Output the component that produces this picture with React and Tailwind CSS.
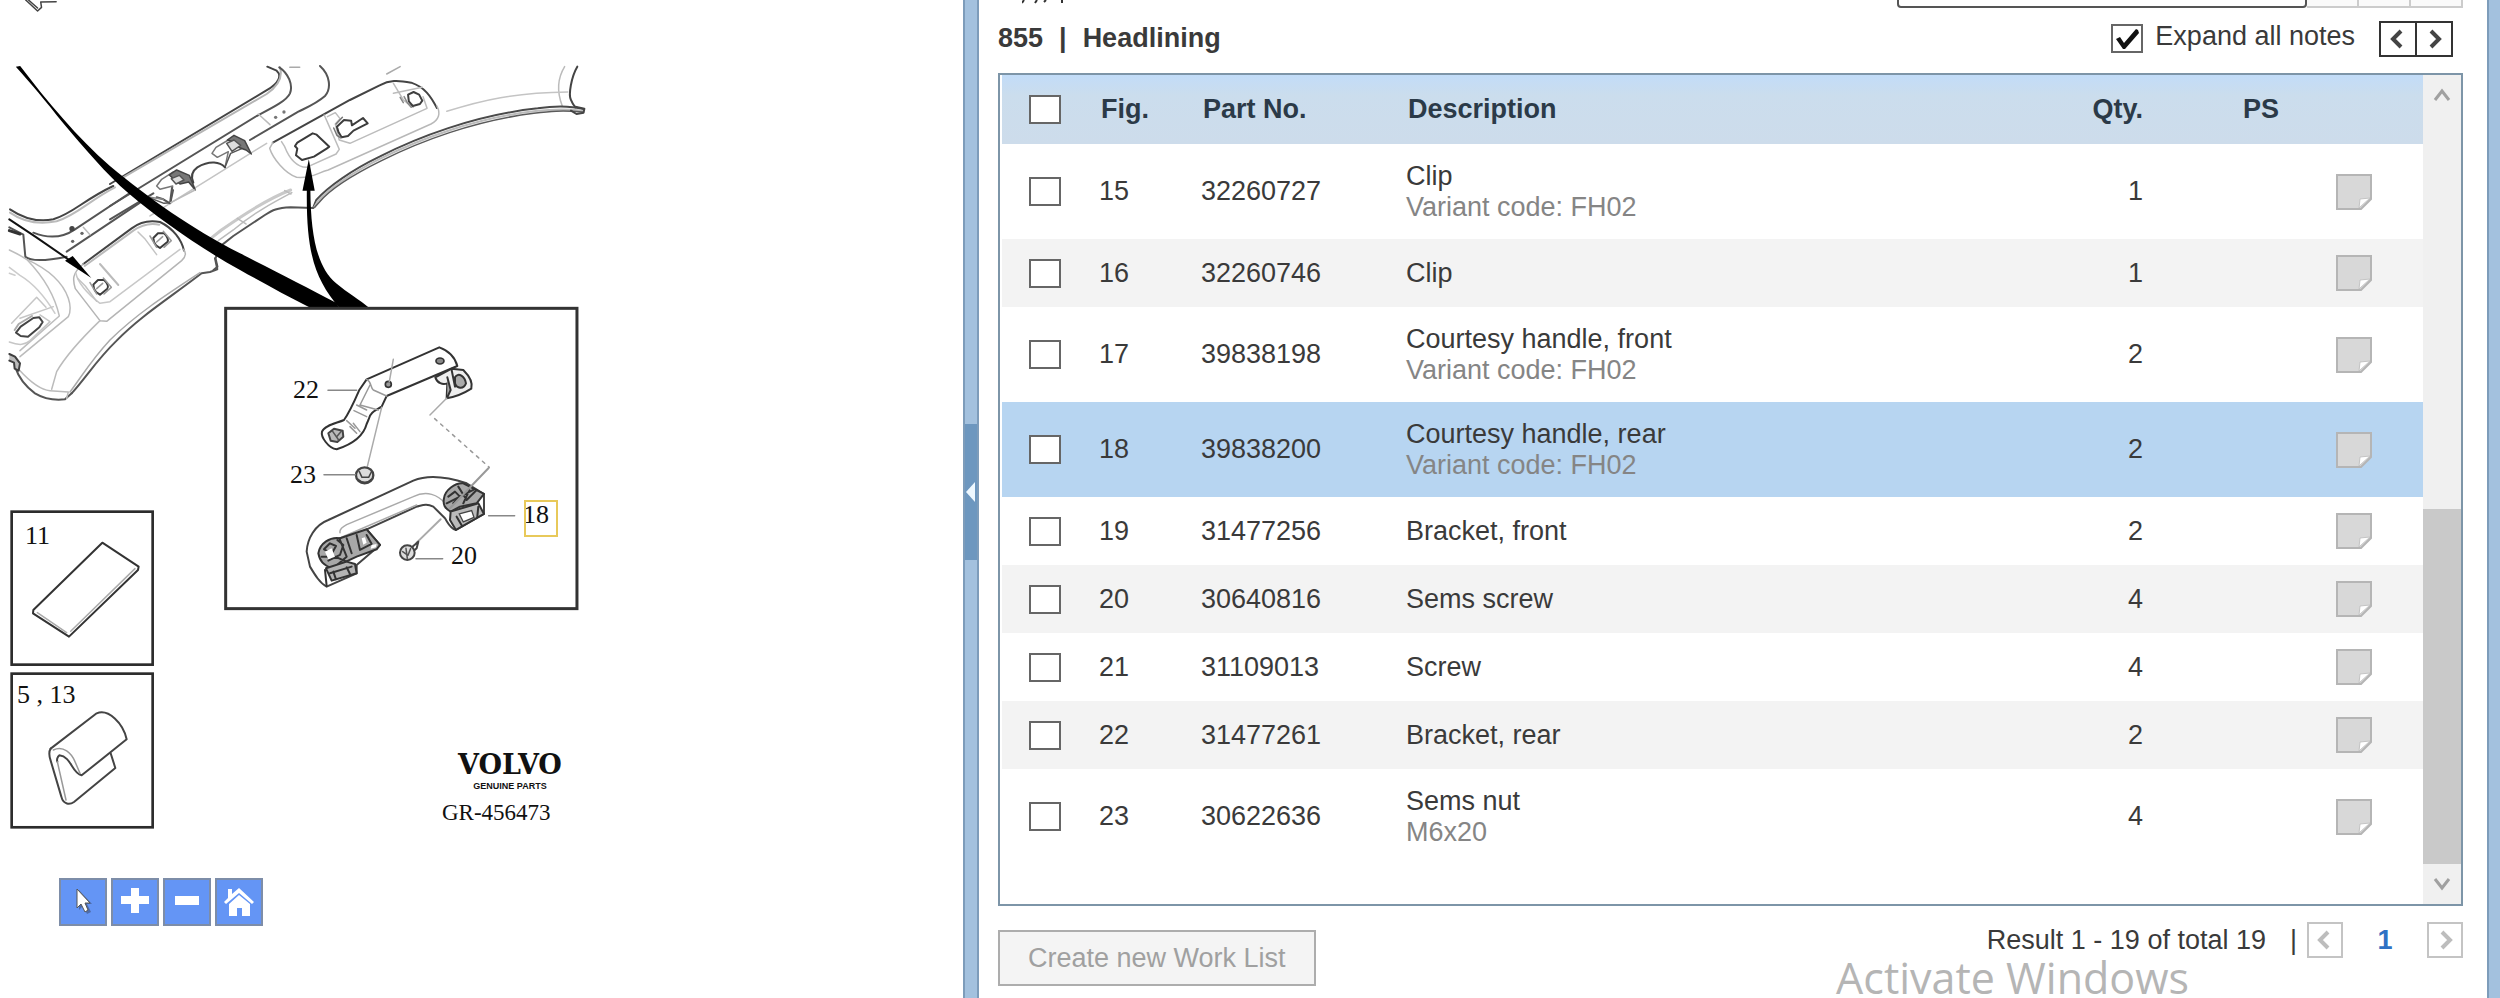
import { useState } from 'react'

const parts = [
  { fig: 15, partNo: '32260727', name: 'Clip', note: 'Variant code: FH02', qty: 1 },
  { fig: 16, partNo: '32260746', name: 'Clip', qty: 1 },
  { fig: 17, partNo: '39838198', name: 'Courtesy handle, front', note: 'Variant code: FH02', qty: 2 },
  { fig: 18, partNo: '39838200', name: 'Courtesy handle, rear', note: 'Variant code: FH02', qty: 2 },
  { fig: 19, partNo: '31477256', name: 'Bracket, front', qty: 2 },
  { fig: 20, partNo: '30640816', name: 'Sems screw', qty: 4 },
  { fig: 21, partNo: '31109013', name: 'Screw', qty: 4 },
  { fig: 22, partNo: '31477261', name: 'Bracket, rear', qty: 2 },
  { fig: 23, partNo: '30622636', name: 'Sems nut', note: 'M6x20', qty: 4 },
]

const SELECTED_FIG = 18

function rowColor(part) {
  if (part.fig === SELECTED_FIG) return 'bg-[#b7d5f1]'
  return part.fig % 2 === 0 ? 'bg-[#f3f3f3]' : 'bg-white'
}

function Line({ d, tone = '#555', width = 1.5, fill = 'none', dash }) {
  return (
    <path
      d={d}
      fill={fill}
      stroke={tone}
      strokeWidth={width}
      strokeDasharray={dash}
      strokeLinecap="round"
      strokeLinejoin="round"
      vectorEffect="non-scaling-stroke"
    />
  )
}

function Headliner() {
  return (
    <>
      {/* front edge and sun roof frame */}
      <g transform="scale(.3954 .3333)">
        <Line d="M65 0L95 33L105 22L103 6L142 5M72 0L95 24" tone="#444" />
        <Line d="M1428 200C1410 235 1408 275 1422 318" tone="#bbb" />
        <Line d="M1460 200C1445 230 1437 285 1444 300C1448 312 1452 318 1455 322" tone="#444" width={2} />
        <Line d="M1130 334C1220 300 1300 278 1436 276" tone="#c4c4c4" />
        <Line d="M978 222L1012 200" tone="#aaa" />
        <Line d="M733 202L758 202" tone="#aaa" />
        <Line d="M1476 328C1440 316 1400 318 1360 325C1200 345 1050 415 960 470C890 510 830 560 800 600L792 624" tone="#4a4a4a" width={2} />
        <Line d="M1474 332C1420 325 1390 328 1355 333C1200 354 1056 420 962 476C896 515 832 564 804 603L794 623" tone="#bbb" width={2} />
        <Line d="M1474 336C1420 330 1390 334 1350 340C1200 362 1060 425 965 482C900 520 835 568 808 606L796 622" tone="#5a5a5a" />
        <Line d="M1455 320L1478 326L1476 338L1458 342L1444 332" tone="#444" width={2} />
        <Line d="M792 624L735 622C700 624 690 630 670 645L590 708L556 740L545 775L550 800L540 810" tone="#555" width={2} />
        <Line d="M735 570C680 595 620 640 560 690L530 718" tone="#c9c9c9" width={3} />
        <Line d="M738 578C690 608 640 640 590 690L552 722" tone="#bbb" />
        <Line d="M600 655L622 672M720 572L736 582" tone="#bbb" />
        {/* rear recess for the handle */}
        <Line d="M690 428L885 300L960 256C985 240 1005 240 1040 248C1075 262 1090 290 1105 324" tone="#444" width={2} />
        <Line d="M690 428L682 445C690 475 720 520 750 532C790 535 800 520 830 510L1090 372C1110 360 1115 340 1105 318" tone="#b8b8b8" />
        <Line d="M712 425L720 440C730 470 745 500 775 502L850 462L858 448L833 380L820 345" tone="#bcbcbc" />
        <Line d="M828 350L848 338L860 356L848 372L858 420L885 430L1080 325L1070 290" tone="#bcbcbc" />
        <Line d="M995 250L1020 300L1045 322M995 280L1068 262" tone="#bcbcbc" />
        <Line d="M1032 284L1046 276L1060 284L1068 302L1062 312L1044 318L1034 304Z" tone="#3f3f3f" width={2} />
        <Line d="M1022 290L1030 308L1040 322M1012 292L1020 308" tone="#888" />
        <Line d="M852 380L870 360L888 362L890 376L918 354L930 370L894 392L880 408L864 412L856 396Z" tone="#3d3d3d" width={2} />
        <Line d="M844 384L852 406L862 414M850 372L866 352" tone="#777" />
      </g>

      {/* side rail with clips */}
      <g transform="translate(110 60) scale(.3333)">
        <Line d="M472 20L500 32C515 45 510 68 468 92L0 372" tone="#444" width={2} />
        <Line d="M510 22C518 48 510 74 470 102L40 352" tone="#b5b5b5" width={2} />
        <Line d="M508 22C535 40 550 75 540 100C530 122 490 142 440 168L0 438" tone="#555" width={2} />
        <Line d="M630 18C660 45 665 85 645 108C620 130 600 138 565 155L420 240M130 400L0 478" tone="#555" width={2} />
        <Line d="M445 162L480 194" tone="#bbb" />
        <circle cx="497" cy="172" r="5" fill="#777" />
        <circle cx="522" cy="156" r="5" fill="#777" />
        <Line d="M470 250L120 468" tone="#c4c4c4" />
        {/* clips */}
        <Line d="M345 322L355 275L322 292L306 280L318 262L355 240" tone="#777" />
        <Line d="M345 322L362 280L404 262" tone="#555" />
        <Line d="M352 240L372 226L404 242L424 282L408 270L385 262L372 246Z" tone="#444" fill="#777" />
        <Line d="M350 250L372 240L392 256L366 274Z" tone="#555" fill="#ddd" />
        <Line d="M250 368C240 345 248 332 262 322C300 300 330 306 345 322" tone="#444" width={2} />
        <Line d="M182 428L188 378L150 388L140 378L155 358L190 336" tone="#777" />
        <Line d="M178 345L200 330L238 346L256 390L236 366L210 372L190 356Z" tone="#444" fill="#777" />
        <Line d="M184 356L208 346L222 360L198 372Z" tone="#555" fill="#ddd" />
        <Line d="M140 412L160 418L180 430L186 384" tone="#555" width={2} />
        <Line d="M120 412L160 418" tone="#888" />
        {/* pocket that the arrow points at */}
        <Line d="M555 258L562 248L608 220L620 224L658 260L650 266L612 290L576 300L558 286L562 266Z" tone="#3a3a3a" width={2} />
      </g>

      {/* front recess and lower edge */}
      <g transform="translate(0 190) scale(.3333)">
        <Line d="M30 58C70 85 110 98 160 88C220 70 250 30 340 -12" tone="#444" width={2} />
        <Line d="M30 68C70 96 120 104 170 94C230 76 270 30 345 -8" tone="#bbb" width={2} />
        <Line d="M100 128C150 148 190 142 225 118L385 12" tone="#555" width={2} />
        <Line d="M200 185L420 38" tone="#555" width={2} />
        <Line d="M450 24L492 40L512 38L520 0" tone="#555" />
        <Line d="M512 38L585 0" tone="#bbb" />
        <Line d="M28 112L70 134L76 200C95 216 140 212 200 200" tone="#555" width={2} />
        <Line d="M28 122L60 132" tone="#333" width={3} />
        <circle cx="216" cy="116" r="8" fill="#444" />
        <circle cx="246" cy="130" r="5" fill="#666" />
        <circle cx="218" cy="154" r="5" fill="#666" />
        <Line d="M250 112L270 134" tone="#bbb" />
        <Line d="M250 222L395 115C420 96 450 90 480 96C520 115 545 150 552 182" tone="#444" width={2} />
        <Line d="M254 228L400 122C425 104 450 98 478 104" tone="#bbb" width={2} />
        <Line d="M250 222C215 250 218 270 226 296L300 392L320 394L545 212C560 198 558 186 550 178" tone="#b5b5b5" />
        <Line d="M228 250C232 275 260 310 300 340L330 335L540 178" tone="#c8c8c8" />
        <Line d="M300 392C240 450 190 510 170 545L155 598" tone="#bbb" />
        {[
          [300, 288],
          [480, 148],
        ].map(([x, y]) => (
          <g key={x} transform={`translate(${x} ${y})`}>
            <Line d="M-20 -4L-6 -18L12 -18C24 -8 26 4 22 8L0 26L-12 18L-18 8Z" tone="#3c3c3c" width={2} />
            <Line d="M-10 8L8 -8M-30 -10L-10 24M10 -24L34 4L12 24" tone="#999" />
            <Line d="M-66 -22L-44 0L-10 46" tone="#c4c4c4" />
          </g>
        ))}
        <Line d="M300 222L355 285" tone="#bbb" width={2} />
        <Line d="M645 205L652 238L630 246L605 250C500 330 420 380 350 452C290 510 260 560 215 610" tone="#555" width={2} />
        <Line d="M600 248C490 320 410 372 330 450C270 515 245 560 210 606" tone="#aaa" />
        <Line d="M215 610L195 628C160 632 130 625 105 610C70 585 55 560 45 530" tone="#555" width={2} />
        <Line d="M58 540C90 575 125 600 150 602L205 606L200 625" tone="#bbb" />
        <Line d="M28 492L45 500L60 520L56 542L44 536L42 518L28 512" tone="#3f3f3f" width={2} fill="#bbb" />
        <Line d="M60 500L205 380C215 360 210 340 205 325C190 280 150 240 80 208" tone="#bbb" />
        <Line d="M28 180C60 195 75 205 82 210C130 260 165 320 178 378L60 482" tone="#bdbdbd" />
        <Line d="M28 232L60 256C100 280 135 320 165 370M28 250L45 256" tone="#ccc" />
        <Line d="M35 400L110 322L138 352M60 385L160 350M28 456C60 468 75 464 90 452L150 395L120 375" tone="#c6c6c6" />
        <Line d="M48 428L62 410L100 384L118 382L128 396L118 412L84 440L62 438Z" tone="#444" width={2} />
        <Line d="M44 420L56 402L96 378" tone="#aaa" width={2} />
        <Line d="M28 88C80 122 130 155 210 212" tone="#111" width={2} />
        <path d="M195 212L218 198L274 264Z" fill="#000" />
      </g>

      {/* callout leaders */}
      <g transform="scale(.3954 .3333)" fill="#000">
        <path d="M40 200L51 198C120 305 195 412 278 498C380 598 480 682 607 760C700 816 770 858 850 908L858 924H786C720 885 660 845 607 810C500 740 400 655 325 580C270 525 210 440 160 370C115 302 78 250 40 200Z" />
        <path d="M776 572H765L781 478L796 572H785C786 700 800 800 850 850C880 880 910 900 934 924H858C800 840 774 770 776 572Z" />
      </g>
    </>
  )
}

function HandleDetail() {
  return (
    <g transform="translate(200 290) scale(.3333)">
      <rect x="77" y="55" width="1054" height="901" fill="#fff" stroke="#333" strokeWidth="9" />
      {/* bracket, fig. 22 */}
      <Line d="M500 268L718 172C745 182 765 200 772 228L560 318L545 350C530 360 510 366 506 388L500 402C490 440 450 465 410 478C385 475 362 440 366 425C375 405 410 400 432 390C450 365 465 330 478 300Z" tone="#333" width={2} fill="#fff" />
      <Line d="M500 268C515 275 510 290 520 300L560 318M510 285L480 345L535 360M470 345L500 360M462 362L500 380M440 392L465 415M460 400L480 425M450 410L470 430" tone="#999" />
      <ellipse cx="720" cy="213" rx="12" ry="9" fill="#888" stroke="#333" strokeWidth="5" />
      <circle cx="565" cy="283" r="9" fill="#999" stroke="#333" strokeWidth="5" />
      <Line d="M580 208L568 275" tone="#aaa" />
      <Line d="M385 430L402 416L428 422L430 440L412 456L392 452Z" tone="#444" width={2} fill="#bbb" />
      <Line d="M398 424L416 450M424 424L410 440" tone="#555" />
      <Line d="M706 262C712 280 728 285 742 280L740 325C770 320 800 305 814 296C820 275 805 255 790 240L755 236Z" tone="#333" width={2} fill="#eee" />
      <Line d="M765 262C775 245 795 260 798 280C790 300 770 295 765 280ZM742 262L752 300L742 322M755 240L765 290" tone="#333" width={2} fill="#aaa" />
      {/* assembly lines */}
      <Line d="M740 325L690 375" tone="#aaa" />
      <Line d="M704 386L868 532" tone="#999" dash="3 5" />
      <Line d="M545 352L502 530" tone="#aaa" />
      {/* nut, fig. 23 */}
      <ellipse cx="494" cy="556" rx="26" ry="24" fill="#dcdcdc" stroke="#444" strokeWidth="7" />
      <Line d="M478 545L486 562L506 562L514 546M474 568C486 580 504 580 514 568" tone="#444" />
      {/* handle, fig. 18 */}
      <Line d="M320 785C322 745 345 705 385 690L640 572C680 555 740 560 800 580L852 612L852 672L768 720C750 715 745 700 735 685L700 650C680 640 670 645 650 650L500 718L540 765L470 825L470 850L380 890C360 880 345 855 330 830Z" tone="#444" width={2} fill="#fff" />
      <Line d="M420 728C418 718 425 712 440 704L640 620C680 600 715 615 735 640M425 742L650 645" tone="#aaa" />
      <Line d="M355 790C360 760 390 740 420 745L500 718L540 765L530 778L470 800L395 835C370 825 360 815 355 790Z" tone="#333" width={2} fill="#a8a8a8" />
      <Line d="M372 778L390 760L408 768L396 790ZM385 812L420 795L430 765L412 750M440 745L455 790M470 735L480 780L515 762L500 735M365 800L405 800L440 815M418 745L440 800L400 835" tone="#333" width={2} />
      <path d="M375 785L395 775L405 800L385 808ZM485 745L495 742L500 758L490 764ZM515 765L530 762L528 772L512 776Z" fill="#fff" />
      <Line d="M378 835L395 872L470 850L465 822L440 815Z" tone="#333" width={2} fill="#b4b4b4" />
      <Line d="M390 850L455 830M400 845L408 868M440 832L450 852M375 840L380 888" tone="#333" width={2} />
      <Line d="M732 625C735 600 765 578 790 580L852 612L830 640L780 650L752 665C735 655 728 645 732 625Z" tone="#333" width={2} fill="#a8a8a8" />
      <Line d="M752 665L835 640L852 672L768 720L750 690Z" tone="#333" width={2} fill="#bbb" />
      <Line d="M745 620L765 605L780 620L760 640M775 590L800 630L830 600M740 640L820 600M790 640L808 600M770 680L785 706M835 650L832 680" tone="#333" width={2} />
      <path d="M778 672L815 662L822 682L790 696Z" fill="#fff" stroke="#444" strokeWidth="4" />
      <Line d="M866 534L750 655" tone="#999" width={2} />
      {/* screw, fig. 20 */}
      <Line d="M722 688L650 758" tone="#aaa" width={2} />
      <Line d="M632 775L655 755L650 775L636 788" tone="#444" width={2} />
      <circle cx="622" cy="788" r="22" fill="#ddd" stroke="#444" strokeWidth="6" />
      <Line d="M608 785L624 796L632 776M618 775L622 805" tone="#555" />
      {/* leaders */}
      <Line d="M384 301L470 301M372 554L466 554M648 806L728 806M866 677L944 677" tone="#888" />
    </g>
  )
}

function SmallParts() {
  return (
    <g transform="translate(0 490) scale(.3333)">
      <rect x="35" y="65" width="423" height="459" fill="none" stroke="#2c2c2c" strokeWidth="8" />
      <rect x="35" y="551" width="423" height="461" fill="none" stroke="#2c2c2c" strokeWidth="8" />
      <Line d="M307 158L416 230L414 240L207 440L99 370L100 360Z" tone="#333" width={2} />
      <Line d="M405 236L212 424M112 368L200 428" tone="#aaa" />
      <Line d="M152 776L290 670C325 655 370 700 380 748L245 856C215 850 215 800 178 796C172 800 170 810 172 815" tone="#444" width={2} />
      <Line d="M152 776C146 785 148 800 152 812L184 920C190 945 210 944 222 936L346 834L332 790" tone="#444" width={2} />
      <Line d="M160 780C190 765 215 790 225 815L240 850M172 815L198 930" tone="#999" />
    </g>
  )
}

function Diagram() {
  return (
    <svg
      width="600"
      height="850"
      role="img"
      aria-label="Headlining"
      className="block shrink-0 font-['Liberation_Serif',serif] text-[26px] text-black"
    >
      <Headliner />
      <HandleDetail />
      <SmallParts />
      <g fill="#111">
        <text x="293" y="398">22</text>
        <text x="290" y="483">23</text>
        <text x="451" y="564">20</text>
        <text x="523" y="523">18</text>
        <text x="25" y="544">11</text>
        <text x="17" y="703">5 , 13</text>
        <text x="442" y="820" className="text-[23px]">GR-456473</text>
        <text x="510" y="774" textAnchor="middle" className="font-['DejaVu_Serif',serif] text-[27px] font-bold">
          VOLVO
        </text>
        <text
          x="510"
          y="789"
          textAnchor="middle"
          className="font-['Liberation_Sans_Narrow','Liberation_Sans',sans-serif] text-[9px] font-bold"
        >
          GENUINE PARTS
        </text>
      </g>
      <rect x="525" y="501" width="32" height="35" fill="none" stroke="#e8c95a" strokeWidth="2" />
    </svg>
  )
}

function ToolButton({ label, children }) {
  return (
    <button
      type="button"
      aria-label={label}
      className="flex size-12 items-center justify-center border-2 border-[#7d8da8] bg-[#6495f5]"
    >
      <svg width="32" height="32" viewBox="0 0 32 32" fill="#fff">
        {children}
      </svg>
    </button>
  )
}

function Toolbar() {
  return (
    <div className="mt-7 ml-[59px] flex gap-1">
      <ToolButton label="Select">
        <path d="M12 4V24L16 20L20 28L24 26L20 18H25Z" fill="#4d6cab" />
        <path d="M10 3V22L14 18L18 26L21 24L18 17H23Z" stroke="#555" strokeWidth="1" />
      </ToolButton>
      <ToolButton label="Zoom in">
        <path d="M12 2H20V10H30V18H20V27H12V18H2V10H12Z" />
      </ToolButton>
      <ToolButton label="Zoom out">
        <path d="M4 10H28V19H4Z" />
      </ToolButton>
      <ToolButton label="Home">
        <path d="M16 2L31 16L29 18L16 7L3 18L1 16L5 12V3H9V8Z" />
        <path d="M16 9L27 18V30H19V22H14V30H6V18Z" />
      </ToolButton>
    </div>
  )
}

function Divider() {
  return (
    <div className="flex flex-col border-x-2 border-[#7d9cba] bg-[#a3c1de] pt-[424px]">
      <button
        type="button"
        aria-label="Collapse picture"
        className="flex h-[136px] w-full items-center justify-center bg-[#6d97bf]"
      >
        <svg width="10" height="20" viewBox="0 0 10 20" fill="#eef8ff">
          <path d="M0 10L9 0V20Z" />
        </svg>
      </button>
    </div>
  )
}

function CheckBox({ label, id, checked, onChange }) {
  return (
    <span className="relative block h-[29px] w-8 shrink-0">
      <input
        type="checkbox"
        id={id}
        aria-label={label}
        checked={checked}
        onChange={onChange}
        className="block h-full w-full appearance-none border-2 border-[#666] bg-white"
      />
      {checked && (
        <svg viewBox="0 0 32 29" className="pointer-events-none absolute inset-0" fill="#111">
          <path d="M5 15L9 13L13 19L25 5L27 6L28 9L14 25H12Z" />
        </svg>
      )}
    </span>
  )
}

function Chevron({ dir, color, width = 4 }) {
  const d = { left: 'M15 4L7 12L15 20', right: 'M9 4L17 12L9 20', up: 'M5 17L12 8L19 17', down: 'M5 7L12 16L19 7' }[dir]
  return (
    <svg width="24" height="24" viewBox="0 0 24 24" fill="none" stroke={color} strokeWidth={width}>
      <path d={d} />
    </svg>
  )
}

function NoteIcon() {
  return (
    <svg width="36" height="36" viewBox="0 0 36 36" className="block">
      <path d="M1 1H35V25L25 35H1Z" fill="#d8d8d8" stroke="#b5b5b5" strokeWidth="2" />
      <path d="M23 34L24 25L34 24Z" fill="#fff" stroke="#c4c4c4" strokeWidth="1" />
    </svg>
  )
}

function SearchRow() {
  return (
    <div className="flex h-2 items-end justify-between overflow-hidden">
      <svg width="50" height="8" viewBox="0 0 50 8" stroke="#333" strokeWidth="2" className="ml-6 self-start">
        <path d="M2 0L0 3M15 0L13 3M24 0L22 2M40 0V3" />
      </svg>
      <div className="flex items-end">
        <input aria-label="Search" className="h-10 w-[410px] rounded border-2 border-[#555] bg-white px-2" />
        <div className="flex h-10 w-[156px] border-b-2 border-[#ccc]">
          {['Search', 'Filter', 'Print'].map((name) => (
            <button key={name} type="button" aria-label={name} className="flex-1 border-r-2 border-[#ccc] bg-[#fafafa]" />
          ))}
        </div>
      </div>
    </div>
  )
}

function PartsTable() {
  const [checked, setChecked] = useState([])

  const toggle = (fig) => {
    setChecked((prev) => (prev.includes(fig) ? prev.filter((f) => f !== fig) : [...prev, fig]))
  }
  const toggleAll = () => {
    setChecked(checked.length === parts.length ? [] : parts.map((p) => p.fig))
  }

  return (
    <div className="flex border-2 border-[#7d95a8]">
      <div className="min-w-0 flex-1 pb-10 pl-0.5">
        <table className="w-full table-fixed border-collapse">
          <colgroup>
            <col className="w-[97px]" />
            <col className="w-[102px]" />
            <col className="w-[205px]" />
            <col />
            <col className="w-[120px]" />
            <col className="w-[193px]" />
            <col className="w-[87px]" />
          </colgroup>
          <thead>
            <tr className="h-[69px] bg-linear-to-b from-[#c2dcf8] via-[#cbdded] via-30% to-[#cddceb] text-left text-[#2b3a48]">
              <th className="pl-[27px]">
                <CheckBox label="Select all" checked={checked.length === parts.length} onChange={toggleAll} />
              </th>
              <th className="pl-0.5">Fig.</th>
              <th className="pl-0.5">Part No.</th>
              <th className="pl-0.5">Description</th>
              <th className="text-right">Qty.</th>
              <th className="pl-[100px]">PS</th>
              <th aria-label="Notes" />
            </tr>
          </thead>
          <tbody>
            {parts.map((part) => (
              <tr key={part.fig} className={`${rowColor(part)} ${part.note ? 'h-[95px]' : 'h-[68px]'}`}>
                <td className="pl-[27px]">
                  <CheckBox
                    label={`Select ${part.partNo}`}
                    checked={checked.includes(part.fig)}
                    onChange={() => toggle(part.fig)}
                  />
                </td>
                <td>{part.fig}</td>
                <td>{part.partNo}</td>
                <td>
                  {part.name}
                  {part.note && <div className="text-[#858585]">{part.note}</div>}
                </td>
                <td className="text-right">{part.qty}</td>
                <td />
                <td>
                  <NoteIcon />
                </td>
              </tr>
            ))}
          </tbody>
        </table>
      </div>
      <div className="flex w-[38px] flex-col bg-[#f0f0f0]">
        <button type="button" aria-label="Scroll up" className="flex h-10 items-center justify-center">
          <Chevron dir="up" color="#a0a0a0" width={3} />
        </button>
        <div className="flex-[395]" />
        <div className="flex-[355] bg-[#c9c9c9]" />
        <button type="button" aria-label="Scroll down" className="flex h-10 items-center justify-center">
          <Chevron dir="down" color="#a0a0a0" width={3} />
        </button>
      </div>
    </div>
  )
}

function Footer() {
  return (
    <div className="flex items-start justify-between">
      <button type="button" className="mt-6 h-14 border-2 border-[#adadad] bg-[#f4f4f4] px-7 text-[#a0a0a0]">
        Create new Work List
      </button>
      <div className="mt-4 flex items-center">
        <span>Result 1 - 19 of total 19</span>
        <span className="ml-6">|</span>
        <button
          type="button"
          aria-label="Previous page"
          className="ml-2.5 flex size-9 items-center justify-center border-2 border-[#c4c4c4]"
        >
          <Chevron dir="left" color="#bdbdbd" />
        </button>
        <a href="#1" className="w-[84px] text-center font-bold text-[#2f72c4]">
          1
        </a>
        <button
          type="button"
          aria-label="Next page"
          className="flex size-9 items-center justify-center border-2 border-[#c4c4c4]"
        >
          <Chevron dir="right" color="#bdbdbd" />
        </button>
      </div>
    </div>
  )
}

export default function App() {
  const [expanded, setExpanded] = useState(true)

  return (
    <div className="relative grid min-h-screen grid-cols-[963fr_16px_1508fr_13px] overflow-hidden bg-white font-['Liberation_Sans',Arial,sans-serif] text-[27px] leading-[31px] text-[#3a3a3a]">
      <section className="min-w-0">
        <Diagram />
        <Toolbar />
      </section>

      <Divider />

      <section className="min-w-0 pr-6 pl-[19px]">
        <SearchRow />
        <div className="mb-1 flex h-[61px] items-center justify-between">
          <h1 className="flex gap-4 font-bold">
            <span>855</span>
            <span>|</span>
            <span>Headlining</span>
          </h1>
          <div className="flex items-center">
            <CheckBox id="expand-notes" checked={expanded} onChange={() => setExpanded(!expanded)} />
            <label htmlFor="expand-notes" className="ml-3 pb-1">
              Expand all notes
            </label>
            <div className="mr-2.5 ml-6 flex h-9">
              <button
                type="button"
                aria-label="Previous section"
                className="flex w-[38px] items-center justify-center border-2 border-[#333]"
              >
                <Chevron dir="left" color="#444" />
              </button>
              <button
                type="button"
                aria-label="Next section"
                className="flex w-9 items-center justify-center border-2 border-l-0 border-[#333]"
              >
                <Chevron dir="right" color="#444" />
              </button>
            </div>
          </div>
        </div>
        <PartsTable />
        <Footer />
      </section>

      <div className="border-l-2 border-[#7d9cba] bg-[#a3c1de]" />

      <div className="pointer-events-none absolute right-[311px] bottom-0 font-['Open_Sans',sans-serif] text-[43px] leading-10 text-[#b5b5b5]">
        Activate Windows
      </div>
    </div>
  )
}
